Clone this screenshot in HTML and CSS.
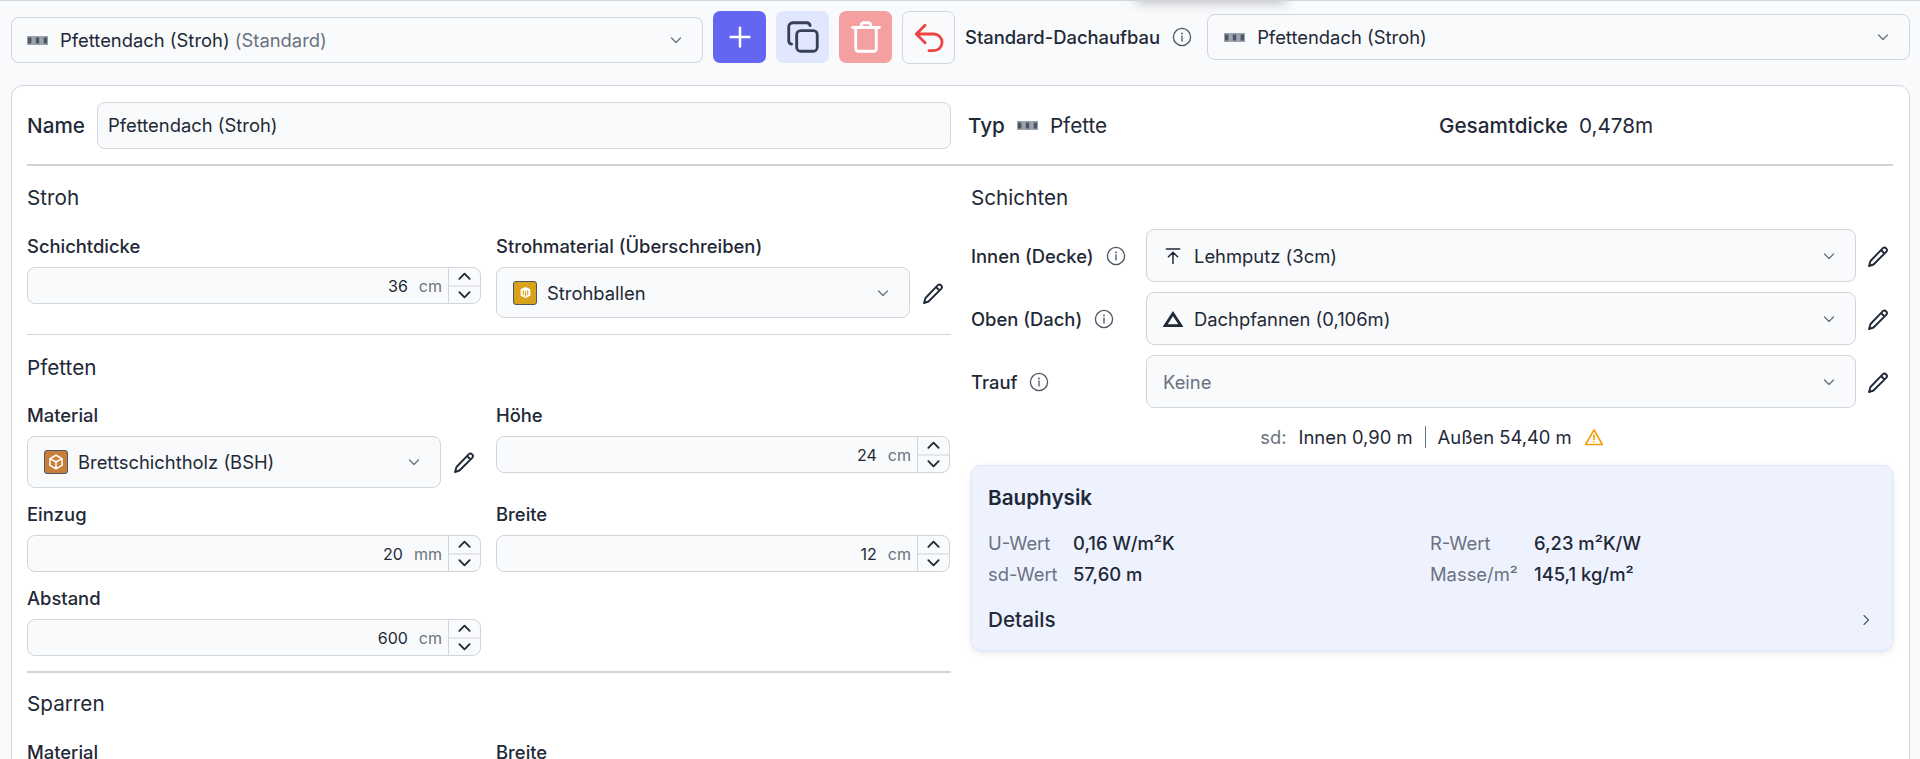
FILE: index.html
```html
<!DOCTYPE html>
<html lang="de">
  <head>
    <meta charset="UTF-8" />
    <meta name="viewport" content="width=device-width, initial-scale=1.0" />
    <title>Dachaufbau</title>
    <link rel="stylesheet" href="styles.css">
  </head>
  <body>
    <svg class="sprites" width="0" height="0">
      <symbol id="beam" viewBox="0 0 21 9">
        <rect x="0" y="0" width="21" height="9" fill="#9ca3af" />
        <rect x="1" y="1.500" width="3.400" height="6" fill="#4b5563" />
        <rect x="8.800" y="1.500" width="3.400" height="6" fill="#4b5563" />
        <rect x="16.600" y="1.500" width="3.400" height="6" fill="#4b5563" />
      </symbol>
      <symbol id="chev-down" viewBox="0 0 16 16">
        <path d="M3.500 6l4.500 4.500L12.500 6" fill="none" stroke="currentColor" stroke-width="1.300" stroke-linecap="round" stroke-linejoin="round" />
      </symbol>
      <symbol id="chev-step" viewBox="0 0 16 16">
        <path d="M2.500 5.500L8 11l5.500-5.500" fill="none" stroke="currentColor" stroke-width="2" stroke-linecap="round" stroke-linejoin="round" />
      </symbol>
      <symbol id="pencil" viewBox="0 0 24 24">
        <path d="M16.900 4.100a2.500 2.500 0 0 1 3.500 3.500L7.500 20.500 3 22l1.500-5zM15 6l3.500 3.500" fill="none" stroke="currentColor" stroke-width="1.900" stroke-linecap="round" stroke-linejoin="round" />
      </symbol>
      <symbol id="info" viewBox="0 0 20 20">
        <circle cx="10" cy="10" r="8.600" fill="none" stroke="currentColor" stroke-width="1.300" />
        <path d="M10 9v5" stroke="currentColor" stroke-width="1.300" stroke-linecap="round" />
        <circle cx="10" cy="6.400" r="0.900" fill="currentColor" />
      </symbol>
      <symbol id="box" viewBox="0 0 24 24">
        <path d="M12 3l8 4.500v9L12 21l-8-4.500v-9zM4.300 7.500L12 12l7.700-4.500M12 12v9" fill="none" stroke="currentColor" stroke-width="2" stroke-linejoin="round" />
      </symbol>
      <symbol id="bale" viewBox="0 0 24 24">
        <path d="M12 2l9 4v12l-9 4-9-4V6z" fill="currentColor" />
        <path d="M8 8v9M12 9v11M16 8v9" stroke="#d9a21b" stroke-width="2" />
      </symbol>
    </svg>

    <!-- Toolbar -->
    <div class="toolbar">
      <div class="select select-main">
        <svg class="beam"><use href="#beam" /></svg>
        <span class="select-text">Pfettendach (Stroh) <span class="muted">(Standard)</span></span>
        <svg class="chev"><use href="#chev-down" /></svg>
      </div>
      <button class="tool-btn btn-add">
        <svg viewBox="0 0 24 24" width="30" height="30"><path d="M12 4.500v15M4.500 12h15" fill="none" stroke="#fff" stroke-width="2" stroke-linecap="round" /></svg>
      </button>
      <button class="tool-btn btn-copy">
        <svg viewBox="0 0 24 24" width="38" height="38"><rect x="8" y="8" width="13" height="13" rx="2.500" fill="none" stroke="#374151" stroke-width="1.800" /><path d="M4.800 16.500C3.800 16.300 3 15.400 3 14.300V5.500C3 4.100 4.100 3 5.500 3h8.800c1.100 0 2 .8 2.200 1.800" fill="none" stroke="#374151" stroke-width="1.800" stroke-linecap="round" /></svg>
      </button>
      <button class="tool-btn btn-delete">
        <svg viewBox="0 0 24 24" width="38" height="38"><path d="M3.500 6h17M9 6V4.500C9 3.700 9.700 3 10.500 3h3c.8 0 1.500.7 1.500 1.500V6M5.500 6v13.500c0 1 .9 1.500 1.500 1.500h10c.6 0 1.500-.5 1.500-1.500V6" fill="none" stroke="#fff" stroke-width="1.800" stroke-linecap="round" stroke-linejoin="round" /></svg>
      </button>
      <button class="tool-btn btn-undo">
        <svg viewBox="0 0 24 24" width="38" height="38"><path d="M9.500 4L4 9.500 9.500 15M4 9.500h11a5 5 0 0 1 0 10.500h-3" fill="none" stroke="#ef4444" stroke-width="1.800" stroke-linecap="round" stroke-linejoin="round" /></svg>
      </button>
      <div class="default-label">
        <span>Standard-Dachaufbau</span>
        <svg class="info"><use href="#info" /></svg>
      </div>
      <div class="select select-default">
        <svg class="beam"><use href="#beam" /></svg>
        <span class="select-text">Pfettendach (Stroh)</span>
        <svg class="chev"><use href="#chev-down" /></svg>
      </div>
    </div>

    <!-- Main card -->
    <div class="card">
      <div class="head-row">
        <div class="head-left">
          <span class="head-label">Name</span>
          <div class="name-input">Pfettendach (Stroh)</div>
        </div>
        <div class="head-right">
          <div class="head-type">
            <span class="head-label">Typ</span>
            <svg class="beam"><use href="#beam" /></svg>
            <span>Pfette</span>
          </div>
          <div class="head-total">
            <span class="head-label">Gesamtdicke</span>
            <span>0,478m</span>
          </div>
        </div>
      </div>

      <div class="columns">
        <!-- Left column -->
        <div class="col-left">
          <section class="section section-stroh">
            <h3>Stroh</h3>
            <div class="field-grid">
              <div class="field">
                <label>Schichtdicke</label>
                <div class="num-input">
                  <span class="num-value">36</span><span class="num-unit">cm</span>
                  <div class="stepper"><span><svg><use href="#chev-step" /></svg></span><span><svg><use href="#chev-step" /></svg></span></div>
                </div>
              </div>
              <div class="field">
                <label>Strohmaterial (Überschreiben)</label>
                <div class="select-edit">
                  <div class="select select-mat">
                    <span class="swatch swatch-straw"><svg><use href="#bale" /></svg></span>
                    <span class="select-text">Strohballen</span>
                    <svg class="chev"><use href="#chev-down" /></svg>
                  </div>
                  <svg class="pencil"><use href="#pencil" /></svg>
                </div>
              </div>
            </div>
          </section>
          <hr class="rule-thin" />
          <section class="section section-pfetten">
            <h3>Pfetten</h3>
            <div class="field-grid">
              <div class="field">
                <label>Material</label>
                <div class="select-edit">
                  <div class="select select-mat">
                    <span class="swatch swatch-wood"><svg><use href="#box" /></svg></span>
                    <span class="select-text">Brettschichtholz (BSH)</span>
                    <svg class="chev"><use href="#chev-down" /></svg>
                  </div>
                  <svg class="pencil"><use href="#pencil" /></svg>
                </div>
              </div>
              <div class="field">
                <label>Höhe</label>
                <div class="num-input">
                  <span class="num-value">24</span><span class="num-unit">cm</span>
                  <div class="stepper"><span><svg><use href="#chev-step" /></svg></span><span><svg><use href="#chev-step" /></svg></span></div>
                </div>
              </div>
              <div class="field">
                <label>Einzug</label>
                <div class="num-input">
                  <span class="num-value">20</span><span class="num-unit">mm</span>
                  <div class="stepper"><span><svg><use href="#chev-step" /></svg></span><span><svg><use href="#chev-step" /></svg></span></div>
                </div>
              </div>
              <div class="field">
                <label>Breite</label>
                <div class="num-input">
                  <span class="num-value">12</span><span class="num-unit">cm</span>
                  <div class="stepper"><span><svg><use href="#chev-step" /></svg></span><span><svg><use href="#chev-step" /></svg></span></div>
                </div>
              </div>
              <div class="field">
                <label>Abstand</label>
                <div class="num-input">
                  <span class="num-value">600</span><span class="num-unit">cm</span>
                  <div class="stepper"><span><svg><use href="#chev-step" /></svg></span><span><svg><use href="#chev-step" /></svg></span></div>
                </div>
              </div>
            </div>
          </section>
          <hr class="rule-thick" />
          <section class="section section-sparren">
            <h3>Sparren</h3>
            <div class="field-grid">
              <div class="field"><label>Material</label></div>
              <div class="field"><label>Breite</label></div>
            </div>
          </section>
        </div>

        <!-- Right column -->
        <div class="col-right">
          <h3>Schichten</h3>
          <div class="layer-rows">
            <div class="layer-row">
              <div class="layer-label"><span>Innen (Decke)</span><svg class="info"><use href="#info" /></svg></div>
              <div class="select select-layer">
                <svg class="layer-icon" viewBox="0 0 24 24"><path d="M4 3.500h16M12 21V8M6.500 13L12 7.500l5.500 5.500" fill="none" stroke="currentColor" stroke-width="1.800" stroke-linecap="round" stroke-linejoin="round" /></svg>
                <span class="select-text">Lehmputz (3cm)</span>
                <svg class="chev"><use href="#chev-down" /></svg>
              </div>
              <svg class="pencil"><use href="#pencil" /></svg>
            </div>
            <div class="layer-row">
              <div class="layer-label"><span>Oben (Dach)</span><svg class="info"><use href="#info" /></svg></div>
              <div class="select select-layer">
                <svg class="layer-icon" viewBox="0 0 24 24"><path d="M12 5.500L2.500 20h19z" fill="none" stroke="currentColor" stroke-width="3.400" stroke-linejoin="miter" /></svg>
                <span class="select-text">Dachpfannen (0,106m)</span>
                <svg class="chev"><use href="#chev-down" /></svg>
              </div>
              <svg class="pencil"><use href="#pencil" /></svg>
            </div>
            <div class="layer-row">
              <div class="layer-label"><span>Trauf</span><svg class="info"><use href="#info" /></svg></div>
              <div class="select select-layer">
                <span class="select-text muted">Keine</span>
                <svg class="chev"><use href="#chev-down" /></svg>
              </div>
              <svg class="pencil"><use href="#pencil" /></svg>
            </div>
          </div>
          <div class="sd-line">
            <span class="muted">sd:</span>
            <span>Innen 0,90 m</span>
            <span class="sd-sep"></span>
            <span>Außen 54,40 m</span>
            <svg class="warn" viewBox="0 0 24 24"><path d="M12 3.500L2 21h20zM12 10v5" fill="none" stroke="#f59e0b" stroke-width="2" stroke-linecap="round" stroke-linejoin="round" /><circle cx="12" cy="17.800" r="1" fill="#f59e0b" /></svg>
          </div>

          <div class="physics">
            <h4>Bauphysik</h4>
            <div class="physics-grid">
              <span class="muted">U-Wert</span><span class="physics-value">0,16 W/m²K</span>
              <span class="muted">R-Wert</span><span class="physics-value">6,23 m²K/W</span>
              <span class="muted">sd-Wert</span><span class="physics-value">57,60 m</span>
              <span class="muted">Masse/m²</span><span class="physics-value">145,1 kg/m²</span>
            </div>
            <div class="physics-details">
              <span>Details</span>
              <svg class="chev-right" viewBox="0 0 16 16"><path d="M6 3.500L10.500 8 6 12.500" fill="none" stroke="currentColor" stroke-width="1.100" stroke-linecap="round" stroke-linejoin="round" /></svg>
            </div>
          </div>
        </div>
      </div>
    </div>
  </body>
</html>
```

FILE: styles.css
```css
* {
  margin: 0;
  padding: 0;
  box-sizing: border-box;
}

html,
body {
  height: 100%;
  overflow: hidden;
}

body {
  font-family: Inter, "Noto Sans", sans-serif;
  font-size: 18.4px;
  line-height: 24px;
  color: #1f2937;
  background: #f9fafb;
  border-top: 1px solid #d1d5db;
}

.sprites {
  display: block;
  height: 0;
}

.muted {
  color: #6b7280;
}

h3 {
  font-size: 20.7px;
  font-weight: 400;
  line-height: 28px;
}

/* Toolbar */
.toolbar {
  display: flex;
  align-items: flex-start;
  height: 84px;
  padding: 10px 10px 0 11px;
  position: relative;
}

.toolbar::before {
  content: "";
  position: absolute;
  left: 1136px;
  width: 150px;
  top: -12px;
  height: 12px;
  box-shadow: 0 2px 12px rgba(0, 0, 0, 0.25);
}

.select {
  display: flex;
  align-items: center;
  background: #f9fafb;
  border: 1px solid #d1d5db;
  border-radius: 8px;
  min-width: 0;
}

.select-text {
  flex: 1;
  white-space: nowrap;
}

.chev {
  width: 16px;
  height: 16px;
  color: #6b7280;
  flex-shrink: 0;
}

.beam {
  width: 21px;
  height: 9px;
  flex-shrink: 0;
}

.select-main {
  width: 692px;
  height: 46px;
  margin-top: 6px;
  padding: 0 18px 0 15px;
  gap: 12px;
}

.tool-btn {
  width: 53px;
  height: 52px;
  border: none;
  border-radius: 7px;
  display: flex;
  align-items: center;
  justify-content: center;
  flex-shrink: 0;
}

.btn-add {
  margin-left: 10px;
  background: #6366f1;
}

.btn-copy {
  margin-left: 10px;
  background: #e0e7ff;
}

.btn-delete {
  margin-left: 10px;
  background: #f5a0a0;
}

.btn-undo {
  margin-left: 10px;
  background: #f9fafb;
  border: 1px solid #d1d5db;
  height: 53px;
}

.default-label {
  display: flex;
  align-items: center;
  gap: 12px;
  margin: 14px 0 0 10px;
  font-weight: 500;
}

.info {
  width: 20px;
  height: 20px;
  color: #4b5563;
  flex-shrink: 0;
}

.select-default {
  flex: 1;
  height: 46px;
  margin: 3px 0 0 15px;
  padding: 0 18px 0 16px;
  gap: 12px;
}

/* Card */
.card {
  margin: 0 10px 0 11px;
  height: 760px;
  padding: 16px 16px 16px 15px;
  background: #fff;
  border: 1px solid #d1d5db;
  border-radius: 12px;
}

.head-row {
  display: flex;
  height: 64px;
  border-bottom: 2px solid #d1d5db;
}

.head-left {
  display: flex;
  gap: 12px;
  width: 924px;
}

.head-label {
  font-size: 20.7px;
  font-weight: 500;
  line-height: 47px;
}

.name-input {
  flex: 1;
  height: 47px;
  line-height: 45px;
  padding: 0 10px;
  background: #f9fafb;
  border: 1px solid #d1d5db;
  border-radius: 8px;
}

.head-right {
  flex: 1;
  display: flex;
  align-items: flex-start;
  padding-left: 17px;
  font-size: 20.7px;
  line-height: 47px;
}

.head-type {
  display: flex;
  align-items: center;
  gap: 12px;
  width: 471px;
  height: 47px;
}

.head-total {
  display: flex;
  gap: 11px;
}

.columns {
  display: flex;
  gap: 20px;
}

.col-left {
  width: 924px;
  flex-shrink: 0;
}

.col-right {
  flex: 1;
}

.section {
  padding-top: 18px;
}

.field-grid {
  display: grid;
  grid-template-columns: 454px 454px;
  column-gap: 15px;
  row-gap: 14px;
  margin-top: 22px;
}

.section-pfetten {
  padding-top: 19px;
}

.section-pfetten .field-grid {
  margin-top: 21px;
}

.section-pfetten .select-mat {
  height: 52px;
}

.field label {
  display: block;
  font-weight: 500;
  line-height: 24px;
  margin-bottom: 9px;
}

.num-input {
  display: flex;
  align-items: center;
  height: 37px;
  background: #f9fafb;
  border: 1px solid #d1d5db;
  border-radius: 8px;
  padding-left: 10px;
  font-size: 16px;
}

.num-value {
  flex: 1;
  text-align: right;
}

.num-unit {
  color: #6b7280;
  margin: 0 6px 0 11px;
}

.stepper {
  width: 32px;
  height: 100%;
  display: flex;
  flex-direction: column;
  border-left: 1px solid #d1d5db;
  flex-shrink: 0;
}

.stepper span {
  flex: 1;
  display: flex;
  align-items: center;
  justify-content: center;
  color: #1f2937;
}

.stepper span:first-child {
  border-bottom: 2px solid #e5e7eb;
}

.stepper span:first-child svg {
  transform: rotate(180deg);
}

.stepper svg {
  width: 15px;
  height: 15px;
}

.select-edit {
  display: flex;
  align-items: center;
}

.select-mat {
  width: 414px;
  height: 51px;
  padding: 0 18px 0 16px;
  gap: 10px;
  flex-shrink: 0;
}

.pencil {
  width: 24px;
  height: 24px;
  color: #1f2937;
  flex-shrink: 0;
}

.select-edit .pencil {
  margin-left: 11px;
}

.swatch {
  width: 24px;
  height: 24px;
  border-radius: 3px;
  border: 1px solid #4b5563;
  display: flex;
  align-items: center;
  justify-content: center;
  color: #fff;
  flex-shrink: 0;
}

.swatch svg {
  width: 18px;
  height: 18px;
}

.swatch-straw svg {
  width: 13px;
  height: 13px;
}

.swatch-straw {
  background: #d9a21b;
}

.swatch-wood {
  background: #c77f3a;
}

.rule-thin {
  border: none;
  border-top: 1px solid #d1d5db;
  margin-top: 16px;
}

.rule-thick {
  border: none;
  border-top: 2px solid #d1d5db;
  margin-top: 15px;
}

.section-sparren {
  padding-top: 17px;
}

/* Right column */
.col-right > h3 {
  padding-top: 18px;
}

.layer-rows {
  display: flex;
  flex-direction: column;
  gap: 10px;
  margin-top: 17px;
}

.layer-row {
  display: flex;
  align-items: center;
}

.layer-label {
  display: flex;
  align-items: center;
  gap: 12px;
  width: 175px;
  font-weight: 500;
  flex-shrink: 0;
}

.select-layer {
  width: 710px;
  height: 53px;
  padding: 0 18px 0 16px;
  gap: 11px;
  flex-shrink: 0;
}

.layer-row .pencil {
  margin-left: 10px;
}

.layer-icon {
  width: 20px;
  height: 20px;
  color: #1f2937;
  flex-shrink: 0;
}

.sd-line {
  display: flex;
  align-items: center;
  justify-content: center;
  gap: 12px;
  margin-top: 17px;
}

.sd-sep {
  width: 1px;
  height: 22px;
  background: #6b7280;
}

.warn {
  width: 20px;
  height: 20px;
  flex-shrink: 0;
}

.physics {
  margin-top: 16px;
  padding: 20px 16px 14px;
  height: 186px;
  background: #eef2ff;
  border: 1px solid #e0e7ff;
  border-radius: 10px;
  box-shadow: 0 2px 6px rgba(0, 0, 0, 0.1);
}

.physics h4 {
  font-size: 20.7px;
  font-weight: 600;
  line-height: 24px;
}

.physics-grid {
  display: grid;
  grid-template-columns: 85px 357px 104px 1fr;
  row-gap: 7px;
  margin-top: 21px;
}

.physics-value {
  font-weight: 500;
}

.physics-details {
  display: flex;
  align-items: center;
  justify-content: space-between;
  margin-top: 22px;
  padding-right: 2px;
  font-size: 20.7px;
  font-weight: 500;
}

.chev-right {
  width: 16px;
  height: 16px;
  color: #4b5563;
}
```
